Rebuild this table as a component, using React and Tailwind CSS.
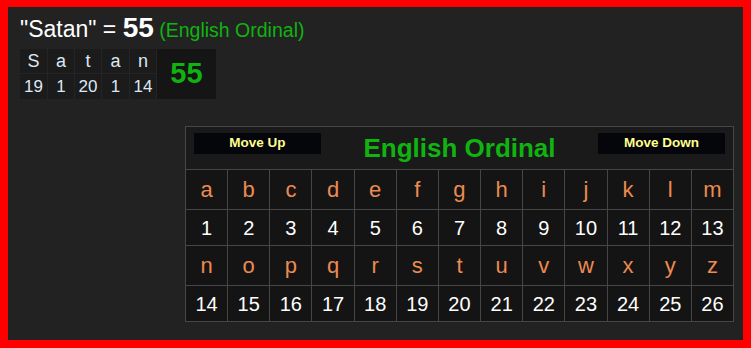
import React from "react";

const L1 = "abcdefghijklm".split("");
const L2 = "nopqrstuvwxyz".split("");

function LetterRow({ letters }) {
  return (
    <>
      {letters.map((l) => (
        <div key={l} className="h-[39px] bg-[#141414] flex items-center justify-center text-[22px] text-[#ec8a52]">
          {l}
        </div>
      ))}
    </>
  );
}

function NumRow({ start }) {
  return (
    <>
      {Array.from({ length: 13 }, (_, i) => (
        <div key={i} className="h-[35px] bg-[#141414] flex items-center justify-center text-[20px] text-white">
          {start + i}
        </div>
      ))}
    </>
  );
}

export default function App() {
  const word = ["S", "a", "t", "a", "n"];
  const vals = [19, 1, 20, 1, 14];
  return (
    <div
      className="w-[751px] h-[348px] border-8 border-t-[7px] border-[#ff0000] bg-[#222222] overflow-hidden"
      style={{ fontFamily: '"Liberation Sans", Arial, sans-serif' }}
    >
      <div className="h-[42px] pl-3 pt-[7px] flex items-baseline leading-none whitespace-nowrap">
        <span className="text-[23px] text-white">"Satan" =&nbsp;</span>
        <span className="text-[28px] font-bold text-white">55</span>
        <span className="text-[19.5px] text-[#11b311]">&nbsp;(English Ordinal)</span>
      </div>
      <div className="ml-3 w-fit grid grid-cols-[27px_26px_26px_27px_26px_59px] grid-rows-[24px_25px] gap-px bg-[#242424]">
        {word.map((c, i) => (
          <div key={"w" + i} className="bg-[#1b1b1b] flex items-center justify-center text-[18px] text-[#dde8f4]">
            {c}
          </div>
        ))}
        <div className="row-span-2 col-start-6 row-start-1 bg-[#151515] flex items-center justify-center text-[29px] font-bold text-[#11b311]">
          55
        </div>
        {vals.map((v, i) => (
          <div key={"v" + i} className="bg-[#1b1b1b] flex items-center justify-center text-[17px] text-[#dde8f4]">
            {v}
          </div>
        ))}
      </div>
      <div className="ml-[177px] mt-[27px] w-[549px] border border-[#464646] bg-[#1a1a1a]">
        <div className="h-[42px] px-[8px] pt-[6px] flex items-start justify-between">
          <div className="w-[127px] h-[21px] bg-[#05050c] flex items-center justify-center text-[13.5px] font-bold text-[#ffff8c]">
            Move Up
          </div>
          <div className="text-[26px] font-bold text-[#11b311] leading-none mt-[2px]">English Ordinal</div>
          <div className="w-[127px] h-[21px] bg-[#05050c] flex items-center justify-center text-[13.5px] font-bold text-[#ffff8c]">
            Move Down
          </div>
        </div>
        <div className="grid grid-cols-[repeat(13,1fr)] gap-px bg-[#464646] border-t border-[#464646]">
          <LetterRow letters={L1} />
          <NumRow start={1} />
          <LetterRow letters={L2} />
          <NumRow start={14} />
        </div>
      </div>
    </div>
  );
}
